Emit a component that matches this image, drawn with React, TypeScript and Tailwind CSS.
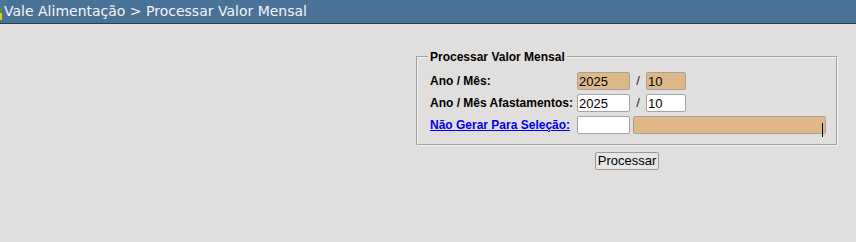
import React from "react";

const inputBase =
  "h-[18px] border border-[#a3a3a3] rounded-[2px] px-[1px] text-[13px] leading-[16px] text-black outline-none [font-family:'Liberation_Sans',Arial,sans-serif]";

export default function App() {
  return (
    <div className="w-[856px] h-[242px] bg-[#e0dfdd] overflow-hidden [font-family:'Liberation_Sans',Arial,sans-serif]">
      <div className="h-[24px] bg-[#4a7297] border-b border-[#2f3b47] flex items-center">
        <svg width="2" height="23" viewBox="0 0 2 23" className="shrink-0">
          <rect x="0" y="8" width="2" height="5" fill="#3f9a3a" />
          <rect x="0" y="13" width="2" height="7" fill="#e8c21c" />
        </svg>
        <span className="ml-[2px] text-[14px] leading-[23px] text-[#f2f5f8] [font-family:'DejaVu_Sans',sans-serif]">
          Vale Alimentação &gt; Processar Valor Mensal
        </span>
      </div>

      <div className="ml-[416px] w-[422px] mt-[26px]">
        <fieldset className="border-2 [border-style:groove] border-[#f4f4f4] pl-[12px] pr-[10px] pt-[6px] pb-[8px] m-0 min-w-0">
          <legend className="ml-[-2px] px-[2px] text-[12px] leading-[14px] font-bold text-black">
            Processar Valor Mensal
          </legend>

          <div className="flex items-center h-[22px]">
            <span className="w-[147px] text-[12px] font-bold text-black">Ano / Mês:</span>
            <input readOnly value="2025" className={`${inputBase} w-[53px] bg-[#deb887]`} />
            <span className="w-[16px] text-center text-[13px] text-[#222]">/</span>
            <input readOnly value="10" className={`${inputBase} w-[40px] bg-[#deb887]`} />
          </div>

          <div className="flex items-center h-[22px]">
            <span className="w-[147px] text-[12px] font-bold text-black">Ano / Mês Afastamentos:</span>
            <input readOnly value="2025" className={`${inputBase} w-[53px] bg-white`} />
            <span className="w-[16px] text-center text-[13px] text-[#222]">/</span>
            <input readOnly value="10" className={`${inputBase} w-[40px] bg-white`} />
          </div>

          <div className="flex items-center h-[22px]">
            <span className="w-[147px] text-[12px] font-bold">
              <a href="#" className="text-[#0000ee] underline">Não Gerar Para Seleção:</a>
            </span>
            <input readOnly value="" className={`${inputBase} w-[53px] bg-white`} />
            <div className="relative ml-[3px]">
              <input readOnly value="" className={`${inputBase} w-[193px] bg-[#deb887] block`} />
              <div className="absolute left-[189px] top-[7px] w-[1px] h-[14px] bg-black" />
            </div>
          </div>
        </fieldset>

        <div className="flex justify-center mt-[6px]">
          <button className="h-[18px] px-[2px] border border-[#9a9a9a] rounded-[2px] bg-[#e6e6e6] text-[13px] leading-[16px] text-black">
            Processar
          </button>
        </div>
      </div>
    </div>
  );
}
